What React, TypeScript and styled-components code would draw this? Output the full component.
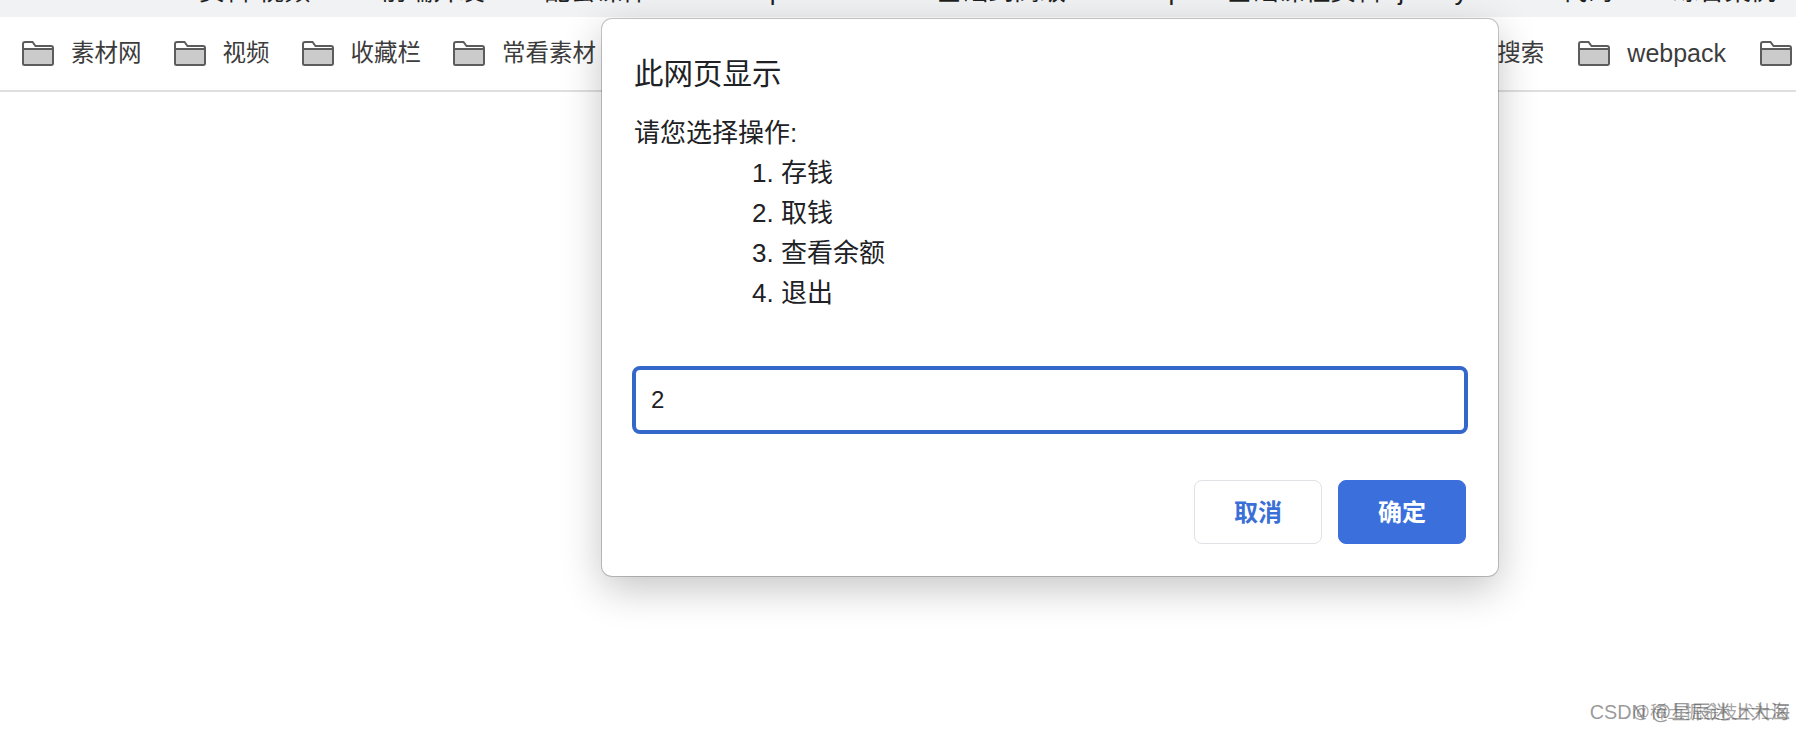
import { FC } from 'react'
import styled, { createGlobalStyle } from 'styled-components'

const GlobalStyle = createGlobalStyle`
  html, body {
    margin: 0;
    padding: 0;
    background: #fff;
    font-family: "Liberation Sans", "Noto Sans CJK SC", sans-serif;
    color: #202124;
  }
`

const Page = styled.div`
  position: relative;
  width: 1796px;
  height: 730px;
  overflow: hidden;
  background: #fff;
`

const AddressStrip = styled.div`
  height: 17px;
  overflow: hidden;
  background: #f1f2f4;
`

const AddressText = styled.div`
  margin-top: -24px;
  padding-left: 30px;
  font-size: 26px;
  line-height: 30px;
  white-space: nowrap;
  color: #1f1f1f;
`

const BookmarkBar = styled.div`
  height: 73px;
  display: flex;
  align-items: center;
  justify-content: space-between;
  padding: 0 4px 0 22px;
  border-bottom: 2px solid #dedfe1;
  box-sizing: content-box;
`

const BookmarkGroup = styled.div<{ $wide?: boolean }>`
  display: flex;
  align-items: center;
  gap: ${(p) => (p.$wide ? '34px' : '32px')};
`

const Bookmark = styled.div`
  display: flex;
  align-items: center;
  gap: 17px;
  color: #3c3c3c;
  white-space: nowrap;
`

const BookmarkLabel = styled.span<{ $latin?: boolean }>`
  font-size: ${(p) => (p.$latin ? '25px' : '23.5px')};
  line-height: 30px;
  margin-top: -1px;
`

const Dialog = styled.div`
  position: absolute;
  left: 602px;
  top: 19px;
  width: 896px;
  height: 557px;
  box-sizing: border-box;
  padding: 35px 30px 32px;
  display: flex;
  flex-direction: column;
  background: #fff;
  border-radius: 10px;
  box-shadow: 0 0 0 1px rgba(0, 0, 0, 0.2), 0 12px 40px rgba(0, 0, 0, 0.24);
`

const DialogTitle = styled.div`
  padding-left: 2px;
  font-size: 29.5px;
  line-height: 40px;
  color: #202124;
`

const Message = styled.div`
  margin-top: 19px;
  padding-left: 2px;
  font-size: 26px;
  line-height: 40px;
  color: #202124;
`

const Option = styled.div`
  padding-left: 118px;
`

const PromptInput = styled.input`
  margin-top: 53px;
  width: 100%;
  height: 68px;
  box-sizing: border-box;
  padding: 0 15px;
  border: 4px solid #3367c9;
  border-radius: 8px;
  outline: none;
  font-family: inherit;
  font-size: 24px;
  color: #202124;
`

const Actions = styled.div`
  margin-top: 46px;
  padding-right: 2px;
  display: flex;
  justify-content: flex-end;
  gap: 16px;
`

const ActionButton = styled.button<{ $primary?: boolean }>`
  width: 128px;
  height: 64px;
  box-sizing: border-box;
  padding: 0 0 4px;
  border-radius: 8px;
  border: 1px solid ${(p) => (p.$primary ? '#3a6fdc' : '#dfe1e4')};
  background: ${(p) => (p.$primary ? '#3a6fdc' : '#fff')};
  color: ${(p) => (p.$primary ? '#fff' : '#3a6fd8')};
  font-family: inherit;
  font-size: 24px;
  font-weight: 700;
`

const Watermark = styled.div<{ $light?: boolean }>`
  position: absolute;
  right: 6px;
  bottom: 6px;
  font-size: ${(p) => (p.$light ? '17.5px' : '19.8px')};
  line-height: 24px;
  white-space: nowrap;
  color: ${(p) => (p.$light ? 'rgba(90, 90, 90, 0.55)' : 'rgba(110, 110, 110, 0.7)')};
`

const FolderIcon: FC = () => (
  <svg width="32" height="25" viewBox="0 0 32 25" fill="none">
    <path d="M1 22.5V3a2 2 0 0 1 2-2h7.5l3 4H29a2 2 0 0 1 2 2v15.5a1.5 1.5 0 0 1-1.5 1.5h-27A1.5 1.5 0 0 1 1 22.5z" fill="#fff" />
    <path d="M1 8h30v14.5a1.5 1.5 0 0 1-1.5 1.5h-27A1.5 1.5 0 0 1 1 22.5z" fill="#cbcbcb" />
    <path d="M1 8h30M1 22.5V3a2 2 0 0 1 2-2h7.5l3 4H29a2 2 0 0 1 2 2v15.5a1.5 1.5 0 0 1-1.5 1.5h-27A1.5 1.5 0 0 1 1 22.5z" stroke="#5c5c5c" strokeWidth="2" />
  </svg>
)

const leftBookmarks = ['素材网', '视频', '收藏栏', '常看素材']

const App: FC = () => (
  <Page>
    <GlobalStyle />
    <AddressStrip>
      <AddressText>/Documents-1/资料/视频/html5前端开发/03-1配套课件1/JavaScript-tutorials-/01基础到高级/Javascript/01基础课程资料-/js-day01-src1/代码/01-1综合案例</AddressText>
    </AddressStrip>
    <BookmarkBar>
      <BookmarkGroup>
        {leftBookmarks.map((name) => (
          <Bookmark key={name}>
            <FolderIcon />
            <BookmarkLabel>{name}</BookmarkLabel>
          </Bookmark>
        ))}
      </BookmarkGroup>
      <BookmarkGroup $wide>
        <Bookmark>
          <BookmarkLabel>搜索</BookmarkLabel>
        </Bookmark>
        <Bookmark>
          <FolderIcon />
          <BookmarkLabel $latin>webpack</BookmarkLabel>
        </Bookmark>
        <Bookmark>
          <FolderIcon />
        </Bookmark>
      </BookmarkGroup>
    </BookmarkBar>
    <Dialog>
      <DialogTitle>此网页显示</DialogTitle>
      <Message>
        请您选择操作:
        <Option>1. 存钱</Option>
        <Option>2. 取钱</Option>
        <Option>3. 查看余额</Option>
        <Option>4. 退出</Option>
      </Message>
      <PromptInput defaultValue="2" />
      <Actions>
        <ActionButton>取消</ActionButton>
        <ActionButton $primary>确定</ActionButton>
      </Actions>
    </Dialog>
    <Watermark>CSDN @星辰迷上大海</Watermark>
    <Watermark $light>@稀土掘金技术社区</Watermark>
  </Page>
)

export default App
